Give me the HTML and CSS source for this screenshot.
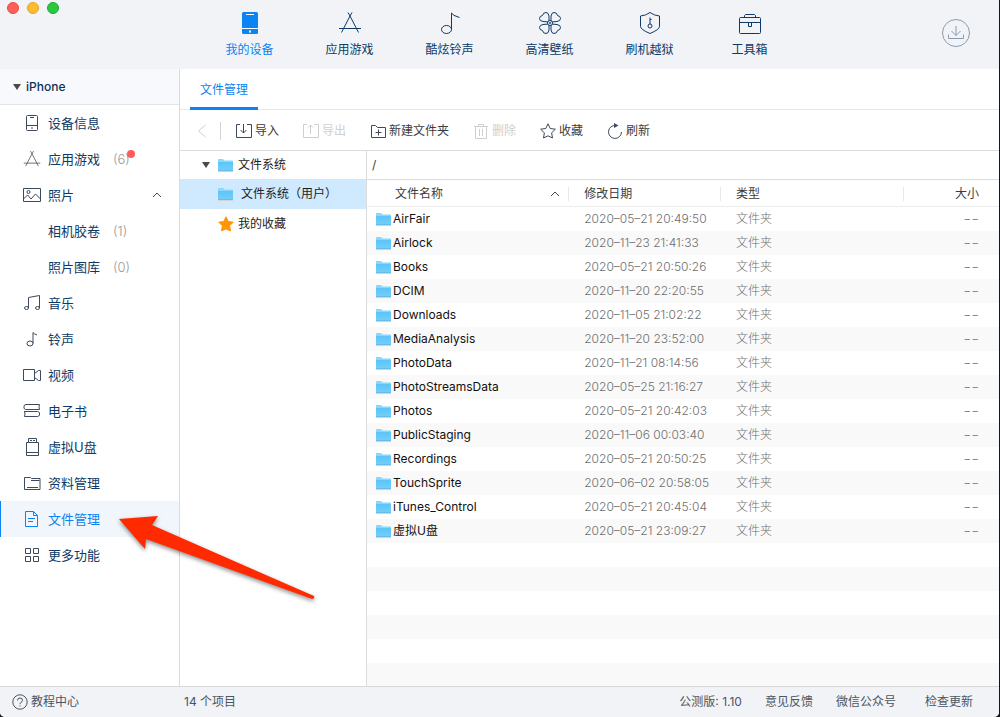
FILE: index.html
```html
<!DOCTYPE html>
<html lang="zh-CN">
<head>
<meta charset="utf-8">
<meta name="viewport" content="width=device-width, initial-scale=1">
<title>文件管理</title>
<link rel="stylesheet" href="styles.css">
</head>
<body>
<svg class="sprite" aria-hidden="true">
  <defs>
    <linearGradient id="folder-fill" x1="0" y1="0" x2="0" y2="1">
      <stop offset="0" stop-color="#5bc5f8"/>
      <stop offset="1" stop-color="#74d0fb"/>
    </linearGradient>
  </defs>
  <symbol id="folder" viewBox="0 0 16 14">
    <path d="M0 13h15v1H0z" fill="#d3d3d3"/>
    <path d="M0 1.5Q0 1 .5 1H5l1.500 1.500h8q.5 0 .5.5V13H0z" fill="#8ad8fb"/>
    <path d="M0 4h15v9H0z" fill="url(#folder-fill)"/>
    <path d="M0 12h15v1H0z" fill="#66bdec"/>
  </symbol>
  <symbol id="appstore" viewBox="0 0 24 24">
    <path d="M10 1.500 12 5l8.500 16.500M14 1.500 12 5 3.500 21.500M1 17.500h22"/>
  </symbol>
  <symbol id="note" viewBox="0 0 24 24">
    <ellipse cx="8.500" cy="18.500" rx="5" ry="4"/>
    <path d="M13.500 18.500V2q1 2.500 8 4.500"/>
  </symbol>
</svg>

<div class="window">
  <header class="titlebar">
    <div class="lights">
      <button class="light light-close" aria-label="关闭"></button>
      <button class="light light-min" aria-label="最小化"></button>
      <button class="light light-max" aria-label="缩放"></button>
    </div>
    <nav class="topnav">
      <a class="topnav-item is-active" href="#">
        <svg class="icon-lg" viewBox="0 0 24 24"><rect x="4" y="1" width="16" height="22" rx="1.500" fill="currentColor" stroke="none"/><path d="M8 3.500h8M4 17.500h16" stroke="#fff"/><path d="M11 19.500h2v2h-2z" fill="#fff" stroke="none"/></svg>
        <span>我的设备</span>
      </a>
      <a class="topnav-item" href="#">
        <svg class="icon-lg"><use href="#appstore"/></svg>
        <span>应用游戏</span>
      </a>
      <a class="topnav-item" href="#">
        <svg class="icon-lg"><use href="#note"/></svg>
        <span>酷炫铃声</span>
      </a>
      <a class="topnav-item" href="#">
        <svg class="icon-lg" viewBox="0 0 24 24">
          <path d="M11 11 5 10.500Q1.500 10 1.500 7.500q0-2.500 3-3Q5 1.500 8 1.500q2.500 0 3 3.500z"/>
          <path d="m13 11 6-.5q3.500-.5 3.500-3 0-2.500-3-3-.5-3-3.500-3-2.500 0-3 3.500z"/>
          <path d="m11 13-6 .5q-3.500.5-3.500 3 0 2.500 3 3 .5 3 3.500 3 2.500 0 3-3.500z"/>
          <path d="m13 13 6 .5q3.500.5 3.500 3 0 2.500-3 3-.5 3-3.500 3-2.500 0-3-3.500z"/>
          <circle cx="12" cy="12" r="2.500" fill="#f1f3f7"/><circle cx="12" cy="12" r=".6"/>
        </svg>
        <span>高清壁纸</span>
      </a>
      <a class="topnav-item" href="#">
        <svg class="icon-lg" viewBox="0 0 24 24"><path d="M12 1.500q4 3 9.500 3.500v10.500q0 3-9.500 7-9.500-4-9.500-7V5Q8 4.500 12 1.500zM12 6.500v6.500M12 8.500h1.500"/><circle cx="12" cy="15" r="2"/></svg>
        <span>刷机越狱</span>
      </a>
      <a class="topnav-item" href="#">
        <svg class="icon-lg" viewBox="0 0 24 24"><rect x="1.500" y="6.500" width="21" height="16" rx="1"/><path d="M6.500 6.500v-2l1-1h9l1 1v2M1.500 11.500h21M10.500 11.500v4h3v-4"/></svg>
        <span>工具箱</span>
      </a>
    </nav>
    <button class="download" aria-label="下载中心">
      <svg viewBox="0 0 30 30"><circle cx="15" cy="15" r="13.500"/><path d="M15 8v9.500M10.500 13l4.500 4.500 4.500-4.500M7.500 16.500v4h15v-4"/></svg>
    </button>
  </header>

  <div class="body">
    <aside class="sidebar">
      <button class="device"><span class="caret"></span>iPhone</button>
      <nav class="menu">
        <a class="menu-item" href="#"><svg class="icon" viewBox="0 0 18 18"><rect x="3.500" y="1.500" width="11" height="15" rx="1"/><path d="M7 3.500h4M3.500 11.500h11M8 14h2" /></svg>设备信息</a>
        <a class="menu-item" href="#"><svg class="icon"><use href="#appstore"/></svg>应用游戏<span class="count">(6)<i class="dot"></i></span></a>
        <a class="menu-item" href="#"><svg class="icon" viewBox="0 0 18 18"><path d="M.5 2.500h17v13H.5zM.5 13l4-4 3.500 4 4.500-5 5 5"/><circle cx="5.500" cy="6" r="1.500"/></svg>照片<svg class="fold" viewBox="0 0 10 6"><path d="m1 5 4-4 4 4"/></svg></a>
        <a class="menu-item is-sub" href="#">相机胶卷<span class="count">(1)</span></a>
        <a class="menu-item is-sub" href="#">照片图库<span class="count">(0)</span></a>
        <a class="menu-item" href="#"><svg class="icon" viewBox="0 0 18 18"><path d="M5.500 14V3.500l11-2V14"/><ellipse cx="3.500" cy="14" rx="2" ry="1.500"/><ellipse cx="14.500" cy="14" rx="2" ry="1.500"/></svg>音乐</a>
        <a class="menu-item" href="#"><svg class="icon" viewBox="0 0 18 18"><ellipse cx="7" cy="13.500" rx="3" ry="2.500"/><path d="M10 13.500v-11q1 1.500 4 2.500"/></svg>铃声</a>
        <a class="menu-item" href="#"><svg class="icon" viewBox="0 0 18 18"><path d="M.5 3.500h11v11H.5zM17.500 4.500h-2l-4 3v4l4 3h2z"/></svg>视频</a>
        <a class="menu-item" href="#"><svg class="icon" viewBox="0 0 18 18"><path d="M16.500 2.500H3q-1.500 0-2 1.500v2q.5 1.500 1.500 1.500h14M16.500 2.500q-1 2.500 0 5M1 9.500h13.500q1.500 0 2 1.500v2q-.5 1.500-2 1.500H1.500q1-2.500 0-5"/></svg>电子书</a>
        <a class="menu-item" href="#"><svg class="icon" viewBox="0 0 18 18"><path d="M5.500 4.500v-4h8v4M3.500 4.500h12v13h-12zM3.500 14.500h12M7 2.500h2M10 2.500h2"/></svg>虚拟U盘</a>
        <a class="menu-item" href="#"><svg class="icon" viewBox="0 0 18 18"><path d="M1.500 15.500v-12h6l1 1h8.500v11zM8 6.500h8.500M4 13.500h11"/></svg>资料管理</a>
        <a class="menu-item is-active" href="#"><svg class="icon" viewBox="0 0 18 18"><path d="M2.500 1.500h8l4 4v11h-12zM10.500 1.500v4h4M5 8.500h7M5 11.500h5"/></svg>文件管理</a>
        <a class="menu-item" href="#"><svg class="icon" viewBox="0 0 18 18"><path d="M2.500 2.500h5v5h-5zM10.500 2.500h5v5h-5zM2.500 10.500h5v5h-5zM10.500 10.500h5v5h-5z"/></svg>更多功能</a>
      </nav>
    </aside>

    <main class="content">
      <div class="tabs"><a class="tab" href="#">文件管理</a></div>
      <div class="toolbar">
        <button class="tool is-off" aria-label="返回"><svg class="back" viewBox="0 0 10 16"><path d="M8.500 2 1.500 8l7 6"/></svg></button>
        <span class="rule"></span>
        <div class="tools">
          <button class="tool"><svg viewBox="0 0 16 16"><path d="M4 1.500H.5v13h15v-13H11M7.500 1v9M4.500 7l3 3 3-3"/></svg>导入</button>
          <button class="tool is-off" disabled><svg viewBox="0 0 16 16"><path d="M4 1.500H.5v13h15v-13H11M7.500 11V2M5 4.500 7.500 2 10 4.500"/></svg>导出</button>
          <button class="tool"><svg viewBox="0 0 16 16"><path d="M1.500 14.500v-12h4l2 2h8v10zM8.500 6.500v6M5.500 9.500h6"/></svg>新建文件夹</button>
          <button class="tool is-off" disabled><svg viewBox="0 0 16 16"><path d="M1 3.500h14M5.500 3.500v-2h5v2M2.500 3.500v12h11v-12M6.500 6v7M9.500 6v7"/></svg>删除</button>
          <button class="tool"><svg viewBox="0 0 16 16"><path d="M8 .8 10.200 5.500l5.200.7-3.800 3.600.9 5.200L8 12.800 3.500 15l.9-5.200L.6 6.200l5.200-.7z"/></svg>收藏</button>
          <button class="tool"><svg viewBox="0 0 16 16"><path d="M9 2.500A6.500 6.500 0 1 0 14.500 9"/><path d="M7 0v5l4.500-2.500z" fill="currentColor" stroke="none"/></svg>刷新</button>
        </div>
      </div>

      <div class="panes">
        <nav class="tree">
          <a class="node" href="#"><span class="caret"></span><svg class="folder"><use href="#folder"/></svg>文件系统</a>
          <a class="node is-child is-active" href="#"><svg class="folder"><use href="#folder"/></svg>文件系统（用户）</a>
          <a class="node is-child-root" href="#"><svg class="folder star" viewBox="0 0 16 16"><path d="M8 .8 10.200 5.500l5 .7-3.600 3.600.9 5.200L8 12.800 3.500 15l.9-5.200L.8 6.200l5-.7z" fill="#ff9500" stroke="#ff9500" stroke-width="1" stroke-linejoin="round"/></svg>我的收藏</a>
        </nav>

        <section class="files">
          <div class="path">/</div>
          <table class="table">
            <colgroup><col class="col-name"><col class="col-date"><col class="col-type"><col class="col-size"></colgroup>
            <thead>
              <tr>
                <th scope="col"><div class="head head-name">文件名称<svg class="fold" viewBox="0 0 10 6"><path d="m1 5 4-4 4 4"/></svg></div></th>
                <th scope="col"><div class="head">修改日期</div></th>
                <th scope="col"><div class="head">类型</div></th>
                <th scope="col"><div class="head head-size">大小</div></th>
              </tr>
            </thead>
            <tbody>
              <tr><td><div class="name"><svg class="folder"><use href="#folder"/></svg>AirFair</div></td><td>2020–05–21 20:49:50</td><td>文件夹</td><td>−−</td></tr>
              <tr><td><div class="name"><svg class="folder"><use href="#folder"/></svg>Airlock</div></td><td>2020–11–23 21:41:33</td><td>文件夹</td><td>−−</td></tr>
              <tr><td><div class="name"><svg class="folder"><use href="#folder"/></svg>Books</div></td><td>2020–05–21 20:50:26</td><td>文件夹</td><td>−−</td></tr>
              <tr><td><div class="name"><svg class="folder"><use href="#folder"/></svg>DCIM</div></td><td>2020–11–20 22:20:55</td><td>文件夹</td><td>−−</td></tr>
              <tr><td><div class="name"><svg class="folder"><use href="#folder"/></svg>Downloads</div></td><td>2020–11–05 21:02:22</td><td>文件夹</td><td>−−</td></tr>
              <tr><td><div class="name"><svg class="folder"><use href="#folder"/></svg>MediaAnalysis</div></td><td>2020–11–20 23:52:00</td><td>文件夹</td><td>−−</td></tr>
              <tr><td><div class="name"><svg class="folder"><use href="#folder"/></svg>PhotoData</div></td><td>2020–11–21 08:14:56</td><td>文件夹</td><td>−−</td></tr>
              <tr><td><div class="name"><svg class="folder"><use href="#folder"/></svg>PhotoStreamsData</div></td><td>2020–05–25 21:16:27</td><td>文件夹</td><td>−−</td></tr>
              <tr><td><div class="name"><svg class="folder"><use href="#folder"/></svg>Photos</div></td><td>2020–05–21 20:42:03</td><td>文件夹</td><td>−−</td></tr>
              <tr><td><div class="name"><svg class="folder"><use href="#folder"/></svg>PublicStaging</div></td><td>2020–11–06 00:03:40</td><td>文件夹</td><td>−−</td></tr>
              <tr><td><div class="name"><svg class="folder"><use href="#folder"/></svg>Recordings</div></td><td>2020–05–21 20:50:25</td><td>文件夹</td><td>−−</td></tr>
              <tr><td><div class="name"><svg class="folder"><use href="#folder"/></svg>TouchSprite</div></td><td>2020–06–02 20:58:05</td><td>文件夹</td><td>−−</td></tr>
              <tr><td><div class="name"><svg class="folder"><use href="#folder"/></svg>iTunes_Control</div></td><td>2020–05–21 20:45:04</td><td>文件夹</td><td>−−</td></tr>
              <tr><td><div class="name"><svg class="folder"><use href="#folder"/></svg>虚拟U盘</div></td><td>2020–05–21 23:09:27</td><td>文件夹</td><td>−−</td></tr>
            </tbody>
          </table>
          <div class="empty"></div>
        </section>
      </div>
    </main>
  </div>

  <footer class="statusbar">
    <a class="help" href="#"><svg viewBox="0 0 16 16"><circle cx="8" cy="8" r="7.200"/><path d="M5.500 6.500Q5.500 4 8 4t2.500 2.300Q10.500 7.500 9 8.300 8 9 8 10.200M8 11.500v1"/></svg>教程中心</a>
    <span class="total">14 个项目</span>
    <span>公测版: 1.10</span>
    <a href="#">意见反馈</a>
    <a href="#">微信公众号</a>
    <a class="update" href="#">检查更新</a>
  </footer>

  <svg class="pointer" viewBox="0 0 206 96" aria-hidden="true">
    <path d="M5 9 44 6l-6 9 162 71q1 3-2 3L32 29l-1 10z"/>
  </svg>
</div>
</body>
</html>
```
FILE: styles.css
```css
* {
  box-sizing: border-box;
}

body {
  margin: 0;
  background: #14161b;
  color: #3c3c3c;
  font: 12px/16px Inter, "Noto Sans CJK SC", sans-serif;
}

a {
  color: inherit;
  text-decoration: none;
}

button {
  padding: 0;
  border: 0;
  background: none;
  color: inherit;
  font: inherit;
}

svg {
  flex: none;
  fill: none;
  stroke: currentColor;
}

.sprite {
  position: absolute;
  width: 0;
  height: 0;
}

.window {
  position: relative;
  display: flex;
  flex-direction: column;
  min-height: 100vh;
  margin-right: 1px;
  overflow: hidden;
  border-radius: 0 0 5px 5px;
  background: #fff;
}

/* Title bar */

.titlebar {
  display: grid;
  grid-template-columns: 1fr auto 1fr;
  height: 69px;
  background: #f1f3f7;
  color: #0d3a66;
}

.lights {
  display: flex;
  gap: 8px;
  padding: 2px 7px;
}

.light {
  width: 12px;
  height: 12px;
  border-radius: 50%;
}

.light-close {
  border: 1px solid #e94b43;
  background: #fc5f57;
}

.light-min {
  border: 1px solid #e2a32c;
  background: #fdbc2e;
}

.light-max {
  border: 1px solid #1eab30;
  background: #28c840;
}

.topnav {
  display: flex;
}

.topnav-item {
  display: flex;
  flex-direction: column;
  align-items: center;
  gap: 7px;
  width: 100px;
  padding-top: 11px;
}

.topnav-item.is-active {
  color: #0a84f2;
}

.icon-lg {
  width: 24px;
  height: 24px;
}

.download {
  place-self: start end;
  margin: 18px 28px 0 0;
  color: #8a9cb0;
}

.download svg {
  display: block;
  width: 30px;
  height: 30px;
}

/* Sidebar */

.body {
  display: flex;
  flex: 1;
}

.sidebar {
  flex: none;
  width: 180px;
  border-right: 1px solid #d9dbde;
}

.device {
  display: flex;
  align-items: center;
  gap: 5px;
  width: 100%;
  height: 36px;
  padding-left: 13px;
  border-bottom: 1px solid #e3e4e6;
  background: #f7f9fc;
  color: #0d3257;
  font-weight: 500;
}

.caret {
  width: 8px;
  border: 4px solid transparent;
  border-top: 6px solid #4a4a4a;
  border-bottom: 0;
}

.menu-item {
  display: flex;
  align-items: center;
  gap: 7px;
  height: 36px;
  padding: 0 17px 0 22px;
  border-left: 1px solid transparent;
  color: #0d3a66;
  font-size: 13px;
}

.menu-item.is-sub {
  padding-left: 47px;
}

.menu-item.is-active {
  border-left-color: #0a84f2;
  background: #f1f6fc;
  color: #0a84f2;
}

.icon {
  width: 18px;
  height: 18px;
  color: #3d4a5c;
}

.is-active .icon {
  color: inherit;
}

.fold {
  width: 10px;
  height: 6px;
  margin-left: auto;
  color: #3d4a5c;
}

.count {
  position: relative;
  margin-left: 6px;
  color: #999;
  font-weight: 300;
}

.dot {
  position: absolute;
  top: -1px;
  right: -5px;
  width: 8px;
  height: 8px;
  border-radius: 50%;
  background: #ff5c5c;
}

/* Tabs and toolbar */

.content {
  display: flex;
  flex: 1;
  flex-direction: column;
  min-width: 0;
}

.tabs {
  display: flex;
  height: 41px;
  padding-left: 10px;
  border-bottom: 1px solid #e6e6e6;
}

.tab {
  height: 41px;
  padding: 13px 10px 0;
  border-bottom: 3px solid #0a84f2;
  color: #0a84f2;
}

.toolbar {
  display: flex;
  align-items: center;
  height: 41px;
  padding: 2px 0 0 17px;
  border-bottom: 1px solid #dcdcdc;
}

.tool {
  display: flex;
  align-items: center;
  gap: 3px;
}

.tool svg {
  width: 16px;
  height: 16px;
  color: #3d4a5c;
}

.tool .back {
  width: 10px;
}

.tool.is-off,
.tool.is-off svg {
  color: #cfcfcf;
}

.rule {
  width: 1px;
  height: 18px;
  margin: 0 15px 0 13px;
  background: #d5d5d5;
}

.tools {
  display: flex;
  gap: 24px;
}

/* Folder tree */

.panes {
  display: flex;
  flex: 1;
}

.tree {
  flex: none;
  width: 187px;
  border-right: 1px solid #dcdcdc;
  color: #222;
}

.node {
  display: flex;
  align-items: center;
  gap: 4px;
  height: 29px;
  padding-left: 22px;
}

.node:first-child {
  height: 28px;
}

.node .caret {
  margin-right: 4px;
}

.node.is-child {
  gap: 7px;
  height: 30px;
  padding-left: 38px;
  background: #cfe9ff;
}

.node.is-child-root {
  padding-left: 38px;
}

.folder {
  width: 16px;
  height: 14px;
  stroke: none;
}

.folder.star {
  height: 16px;
}

/* File list */

.files {
  display: flex;
  flex: 1;
  flex-direction: column;
  min-width: 0;
}

.path {
  height: 29px;
  padding: 6px 5px;
  border-bottom: 1px solid #dcdcdc;
}

.table {
  width: 100%;
  border-spacing: 0;
  table-layout: fixed;
}

.col-name {
  width: 32%;
}

.col-date {
  width: 24%;
}

.col-type {
  width: 29%;
}

.col-size {
  width: 15%;
}

.table th {
  height: 27px;
  padding: 2px 0 0;
  border-bottom: 1px solid #ededed;
  font-weight: 400;
  text-align: left;
}

.head {
  display: flex;
  align-items: center;
  height: 14px;
  padding-left: 15px;
  border-right: 1px solid #e8e8e8;
}

.head-name {
  padding: 0 8px 0 28px;
}

.head-size {
  justify-content: flex-end;
  padding-right: 20px;
  border-right: 0;
}

.table td {
  height: 24px;
  padding: 0 0 0 15px;
  color: #6e6e6e;
  font-weight: 300;
}

.table td:first-child {
  padding-left: 9px;
  color: #111;
  font-weight: 400;
}

.table td:last-child {
  padding-right: 20px;
  text-align: right;
}

.table tbody tr:nth-child(even) {
  background: #f9f9f9;
}

.name {
  display: flex;
  align-items: center;
  gap: 1px;
}

.empty {
  flex: 1;
  background: repeating-linear-gradient(#fff 0 24px, #f9f9f9 24px 48px);
}

/* Status bar */

.statusbar {
  display: flex;
  align-items: center;
  gap: 23px;
  height: 31px;
  padding: 0 26px 0 12px;
  border-top: 1px solid #d6d9de;
  background: #f1f3f7;
  color: #4b5563;
}

.help {
  display: flex;
  align-items: center;
  gap: 3px;
  width: 149px;
}

.help svg {
  width: 16px;
  height: 16px;
}

.total {
  margin-right: auto;
}

.update {
  margin-left: 6px;
}

/* Arrow callout over the file manager entry */

.pointer {
  position: absolute;
  top: 510px;
  left: 114px;
  width: 206px;
  height: 96px;
  fill: #ff2a00;
  stroke: none;
  filter: drop-shadow(0 2px 2px rgba(0, 0, 0, 0.45));
  pointer-events: none;
}
```
